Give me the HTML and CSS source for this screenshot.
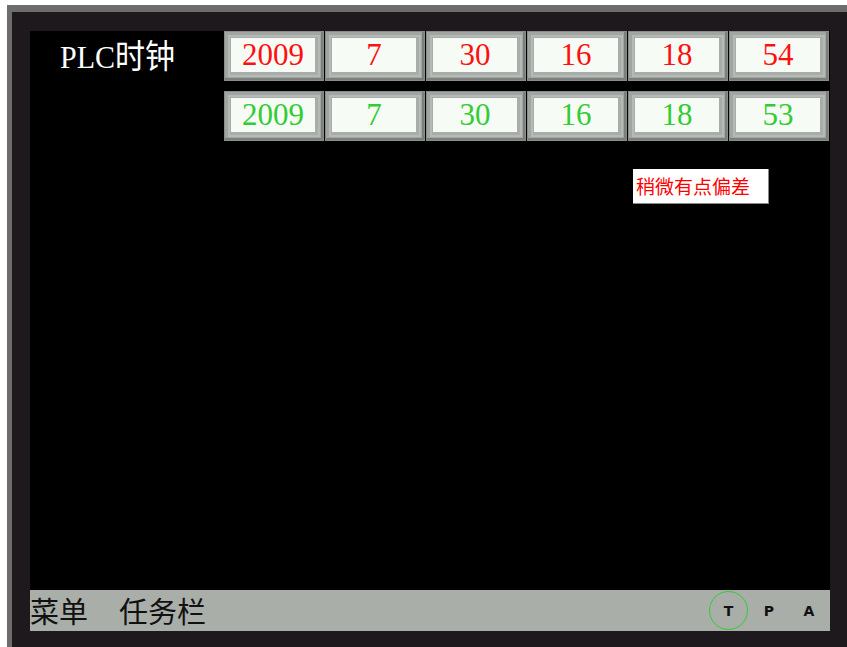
FILE: index.html
```html
<!DOCTYPE html>
<html lang="zh">
<head>
    <meta charset="UTF-8">
    <title>PLC时钟</title>
    <link rel="stylesheet" href="styles.css">
</head>
<body>

    <div class="frame">
        <div class="screen">
            <div class="main">
                <div class="clock-grid">
                    <div class="title">PLC时钟</div>
                    <div class="cell"><span class="val red">2009</span></div>
                    <div class="cell"><span class="val red">7</span></div>
                    <div class="cell"><span class="val red">30</span></div>
                    <div class="cell"><span class="val red">16</span></div>
                    <div class="cell"><span class="val red">18</span></div>
                    <div class="cell"><span class="val red">54</span></div>

                    <div class="blank"></div>
                    <div class="cell"><span class="val green">2009</span></div>
                    <div class="cell"><span class="val green">7</span></div>
                    <div class="cell"><span class="val green">30</span></div>
                    <div class="cell"><span class="val green">16</span></div>
                    <div class="cell"><span class="val green">18</span></div>
                    <div class="cell"><span class="val green">53</span></div>
                </div>

                <div class="note">稍微有点偏差</div>
            </div>

            <div class="taskbar">
                <span class="menu">菜单</span>
                <span class="menu">任务栏</span>
                <div class="status">
                    <span class="flag active">T</span>
                    <span class="flag">P</span>
                    <span class="flag">A</span>
                </div>
            </div>
        </div>
    </div>

</body>
</html>
```

FILE: styles.css
```css
body {
    margin: 0;
    padding: 0;
    background-color: #fff;
    overflow: hidden;
}

.frame {
    margin: 5px 0 0 7px;
    height: 642px;
    box-sizing: border-box;
    border-top: 7px solid #6d6d6d;
    border-left: 5px solid #6d6d6d;
    background-color: #1d191d;
    padding: 19px 0 0 18px;
}

.screen {
    width: 800px;
    height: 600px;
    display: flex;
    flex-direction: column;
}

.main {
    height: 559px;
    background-color: #000;
}

.clock-grid {
    display: grid;
    grid-template-columns: 194px repeat(6, 101px);
    grid-template-rows: 50px 50px;
    row-gap: 10px;
}

.title {
    color: #fff;
    font-family: "Liberation Serif", "Noto Sans CJK SC", serif;
    font-size: 30px;
    line-height: 40px;
    padding: 4px 0 0 30px;
    transform: scaleY(1.08);
    transform-origin: left top;
}

.cell {
    width: 100px;
    height: 50px;
    box-sizing: border-box;
    padding: 7px 9px 9px 7px;
    background-color: #a9ada9;
    box-shadow: inset 0 0 0 1px #8a8e8a, inset -2px -2px 0 1px #7c807c, inset 0 0 0 4px #a2a6a2, inset 0 0 0 6px #b6bab6;
}

.val {
    display: block;
    height: 100%;
    background-color: #f6fbf6;
    text-align: center;
    font-family: "Liberation Serif", serif;
    font-size: 31px;
    line-height: 34px;
}

.red {
    color: #ff1010;
}

.green {
    color: #33cc33;
}

.note {
    margin: 28px 0 0 603px;
    width: 136px;
    height: 35px;
    box-sizing: border-box;
    background-color: #fff;
    border-right: 1px solid #888;
    border-bottom: 1px solid #888;
    color: #ff0000;
    font-family: "Noto Sans CJK SC", sans-serif;
    font-size: 19px;
    line-height: 33px;
    padding-left: 3px;
    white-space: nowrap;
}

.taskbar {
    height: 41px;
    background-color: #a9aea9;
    display: flex;
    align-items: center;
}

.menu {
    font-family: "Noto Sans CJK SC", sans-serif;
    font-size: 29px;
    color: #111;
    line-height: 41px;
    margin-right: 31px;
}

.status {
    margin-left: auto;
    display: flex;
    align-items: center;
    margin-right: 1px;
}

.flag {
    width: 40px;
    height: 40px;
    box-sizing: border-box;
    display: flex;
    align-items: center;
    justify-content: center;
    font-family: "DejaVu Sans", sans-serif;
    font-weight: bold;
    font-size: 14px;
    color: #111;
}

.flag.active {
    border: 1.5px solid #33cc33;
    border-radius: 50%;
    width: 39px;
    height: 39px;
    margin-right: 1px;
}
```
